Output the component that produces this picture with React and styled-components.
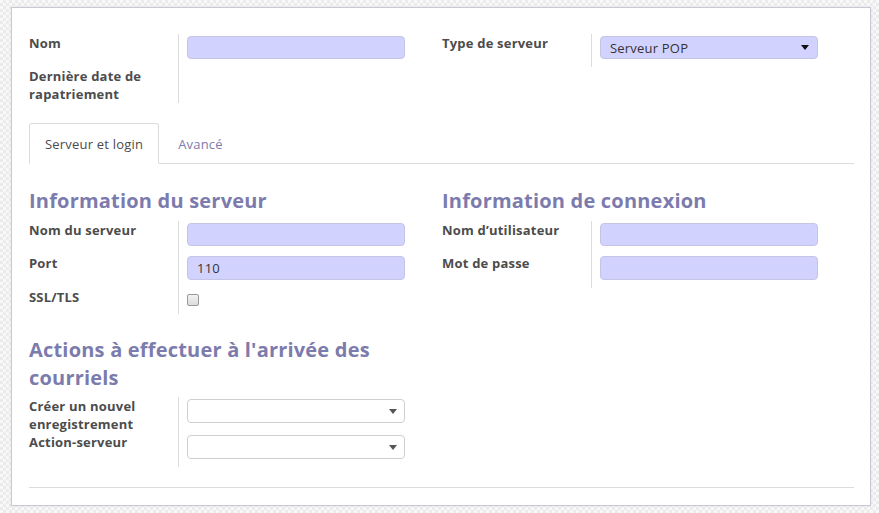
import React from 'react'
import styled, { createGlobalStyle } from 'styled-components'

const GlobalStyle = createGlobalStyle`
  html, body {
    margin: 0;
    padding: 0;
  }
  body {
    font-family: "Open Sans", "Liberation Sans", sans-serif;
    font-size: 13px;
    letter-spacing: 0.2px;
    color: #4c4c4c;
    background-color: #f5f5f5;
    background-image: repeating-conic-gradient(#ebebeb 0% 25%, #f8f8f8 0% 50%);
    background-size: 6px 6px;
    min-height: 513px;
  }
`

const Page = styled.div`
  padding: 7px 8px 9px 11px;
`

const Sheet = styled.div`
  background: #fff;
  border: 1px solid #c9c8d6;
  box-shadow: 0 0 2px rgba(0, 0, 0, 0.08);
  padding: 26px 16px 17px 17px;
`

const Group = styled.div`
  display: grid;
  grid-template-columns: 413px 1fr;
  margin-bottom: ${(p) => p.$mb || 0}px;
`

const InnerGroup = styled.div`
  display: grid;
  grid-template-columns: 150px 1fr;
  align-content: start;
`

const Heading = styled.div`
  grid-column: 1 / 3;
  color: #7c7bad;
  font-size: 20px;
  font-weight: 700;
  line-height: 28px;
  margin-bottom: ${(p) => p.$mb || 6}px;
  padding-right: 40px;
`

const Label = styled.div`
  font-weight: 700;
  line-height: 18px;
  padding-right: 10px;
  border-right: 1px solid #dcdcdc;
`

const Field = styled.div`
  padding: 2px 0 ${(p) => (p.$empty ? 0 : 8)}px 8px;
`

const Input = styled.div`
  box-sizing: border-box;
  width: 218px;
  height: ${(p) => p.$h || 23}px;
  border: 1px solid ${(p) => (p.$required ? '#c4c4e6' : '#cfcfcf')};
  border-radius: 4px;
  background: ${(p) => (p.$required ? '#d2d2ff' : '#fff')};
  padding: 0 9px;
  display: flex;
  align-items: center;
  justify-content: space-between;
  line-height: 20px;
  color: #333;
`

const Caret = styled.span`
  width: 0;
  height: 0;
  border-left: 4px solid transparent;
  border-right: 4px solid transparent;
  border-top: 5px solid ${(p) => p.$color || '#555'};
  margin-right: ${(p) => p.$mr || -2}px;
`

const Checkbox = styled.div`
  box-sizing: border-box;
  width: 12px;
  height: 12px;
  margin-top: 4px;
  border: 1px solid #999;
  border-radius: 2px;
  background: linear-gradient(#f2f2f2, #dcdcdc);
`

const TabBar = styled.div`
  display: flex;
  border-bottom: 1px solid #dcdcdc;
  margin-top: 20px;
`

const Tab = styled.div`
  padding: 10px 15px 9px;
  line-height: 20px;
  margin-right: 3px;
  margin-bottom: -1px;
  border: 1px solid ${(p) => (p.$active ? '#dcdcdc' : 'transparent')};
  border-bottom-color: ${(p) => (p.$active ? '#fff' : 'transparent')};
  border-radius: 3px 3px 0 0;
  background: ${(p) => (p.$active ? '#fff' : 'transparent')};
  color: ${(p) => (p.$active ? '#4c4c4c' : '#7c7bad')};
`

const TabContent = styled.div`
  padding-top: 23px;
`

const Rule = styled.div`
  border-top: 1px solid #dcdcdc;
  margin-top: 20px;
`

const Row = ({ label, children, empty }) => (
  <>
    <Label>{label}</Label>
    <Field $empty={empty}>{children}</Field>
  </>
)

export default function App() {
  return (
    <Page>
      <GlobalStyle />
      <Sheet>
        <Group>
          <InnerGroup>
            <Row label="Nom">
              <Input $required />
            </Row>
            <Row label={<>Dernière date de<br />rapatriement</>} empty />
          </InnerGroup>
          <InnerGroup>
            <Row label="Type de serveur">
              <Input $required>
                Serveur POP
                <Caret $color="#111" $mr={-1} />
              </Input>
            </Row>
          </InnerGroup>
        </Group>

        <TabBar>
          <Tab $active>Serveur et login</Tab>
          <Tab>Avancé</Tab>
        </TabBar>

        <TabContent>
          <Group $mb={22}>
            <InnerGroup>
              <Heading>Information du serveur</Heading>
              <Row label="Nom du serveur">
                <Input $required />
              </Row>
              <Row label="Port">
                <Input $required $h={24}>110</Input>
              </Row>
              <Row label="SSL/TLS">
                <Checkbox />
              </Row>
            </InnerGroup>
            <InnerGroup>
              <Heading>Information de connexion</Heading>
              <Row label="Nom d’utilisateur">
                <Input $required />
              </Row>
              <Row label="Mot de passe">
                <Input $required $h={24} />
              </Row>
            </InnerGroup>
          </Group>

          <Group>
            <InnerGroup>
              <Heading $mb={5}>Actions à effectuer à l'arrivée des courriels</Heading>
              <Row label={<>Créer un nouvel<br />enregistrement</>}>
                <Input $h={24}>
                  <span />
                  <Caret />
                </Input>
              </Row>
              <Row label="Action-serveur">
                <Input $h={24}>
                  <span />
                  <Caret />
                </Input>
              </Row>
            </InnerGroup>
          </Group>
        </TabContent>

        <Rule />
      </Sheet>
    </Page>
  )
}
